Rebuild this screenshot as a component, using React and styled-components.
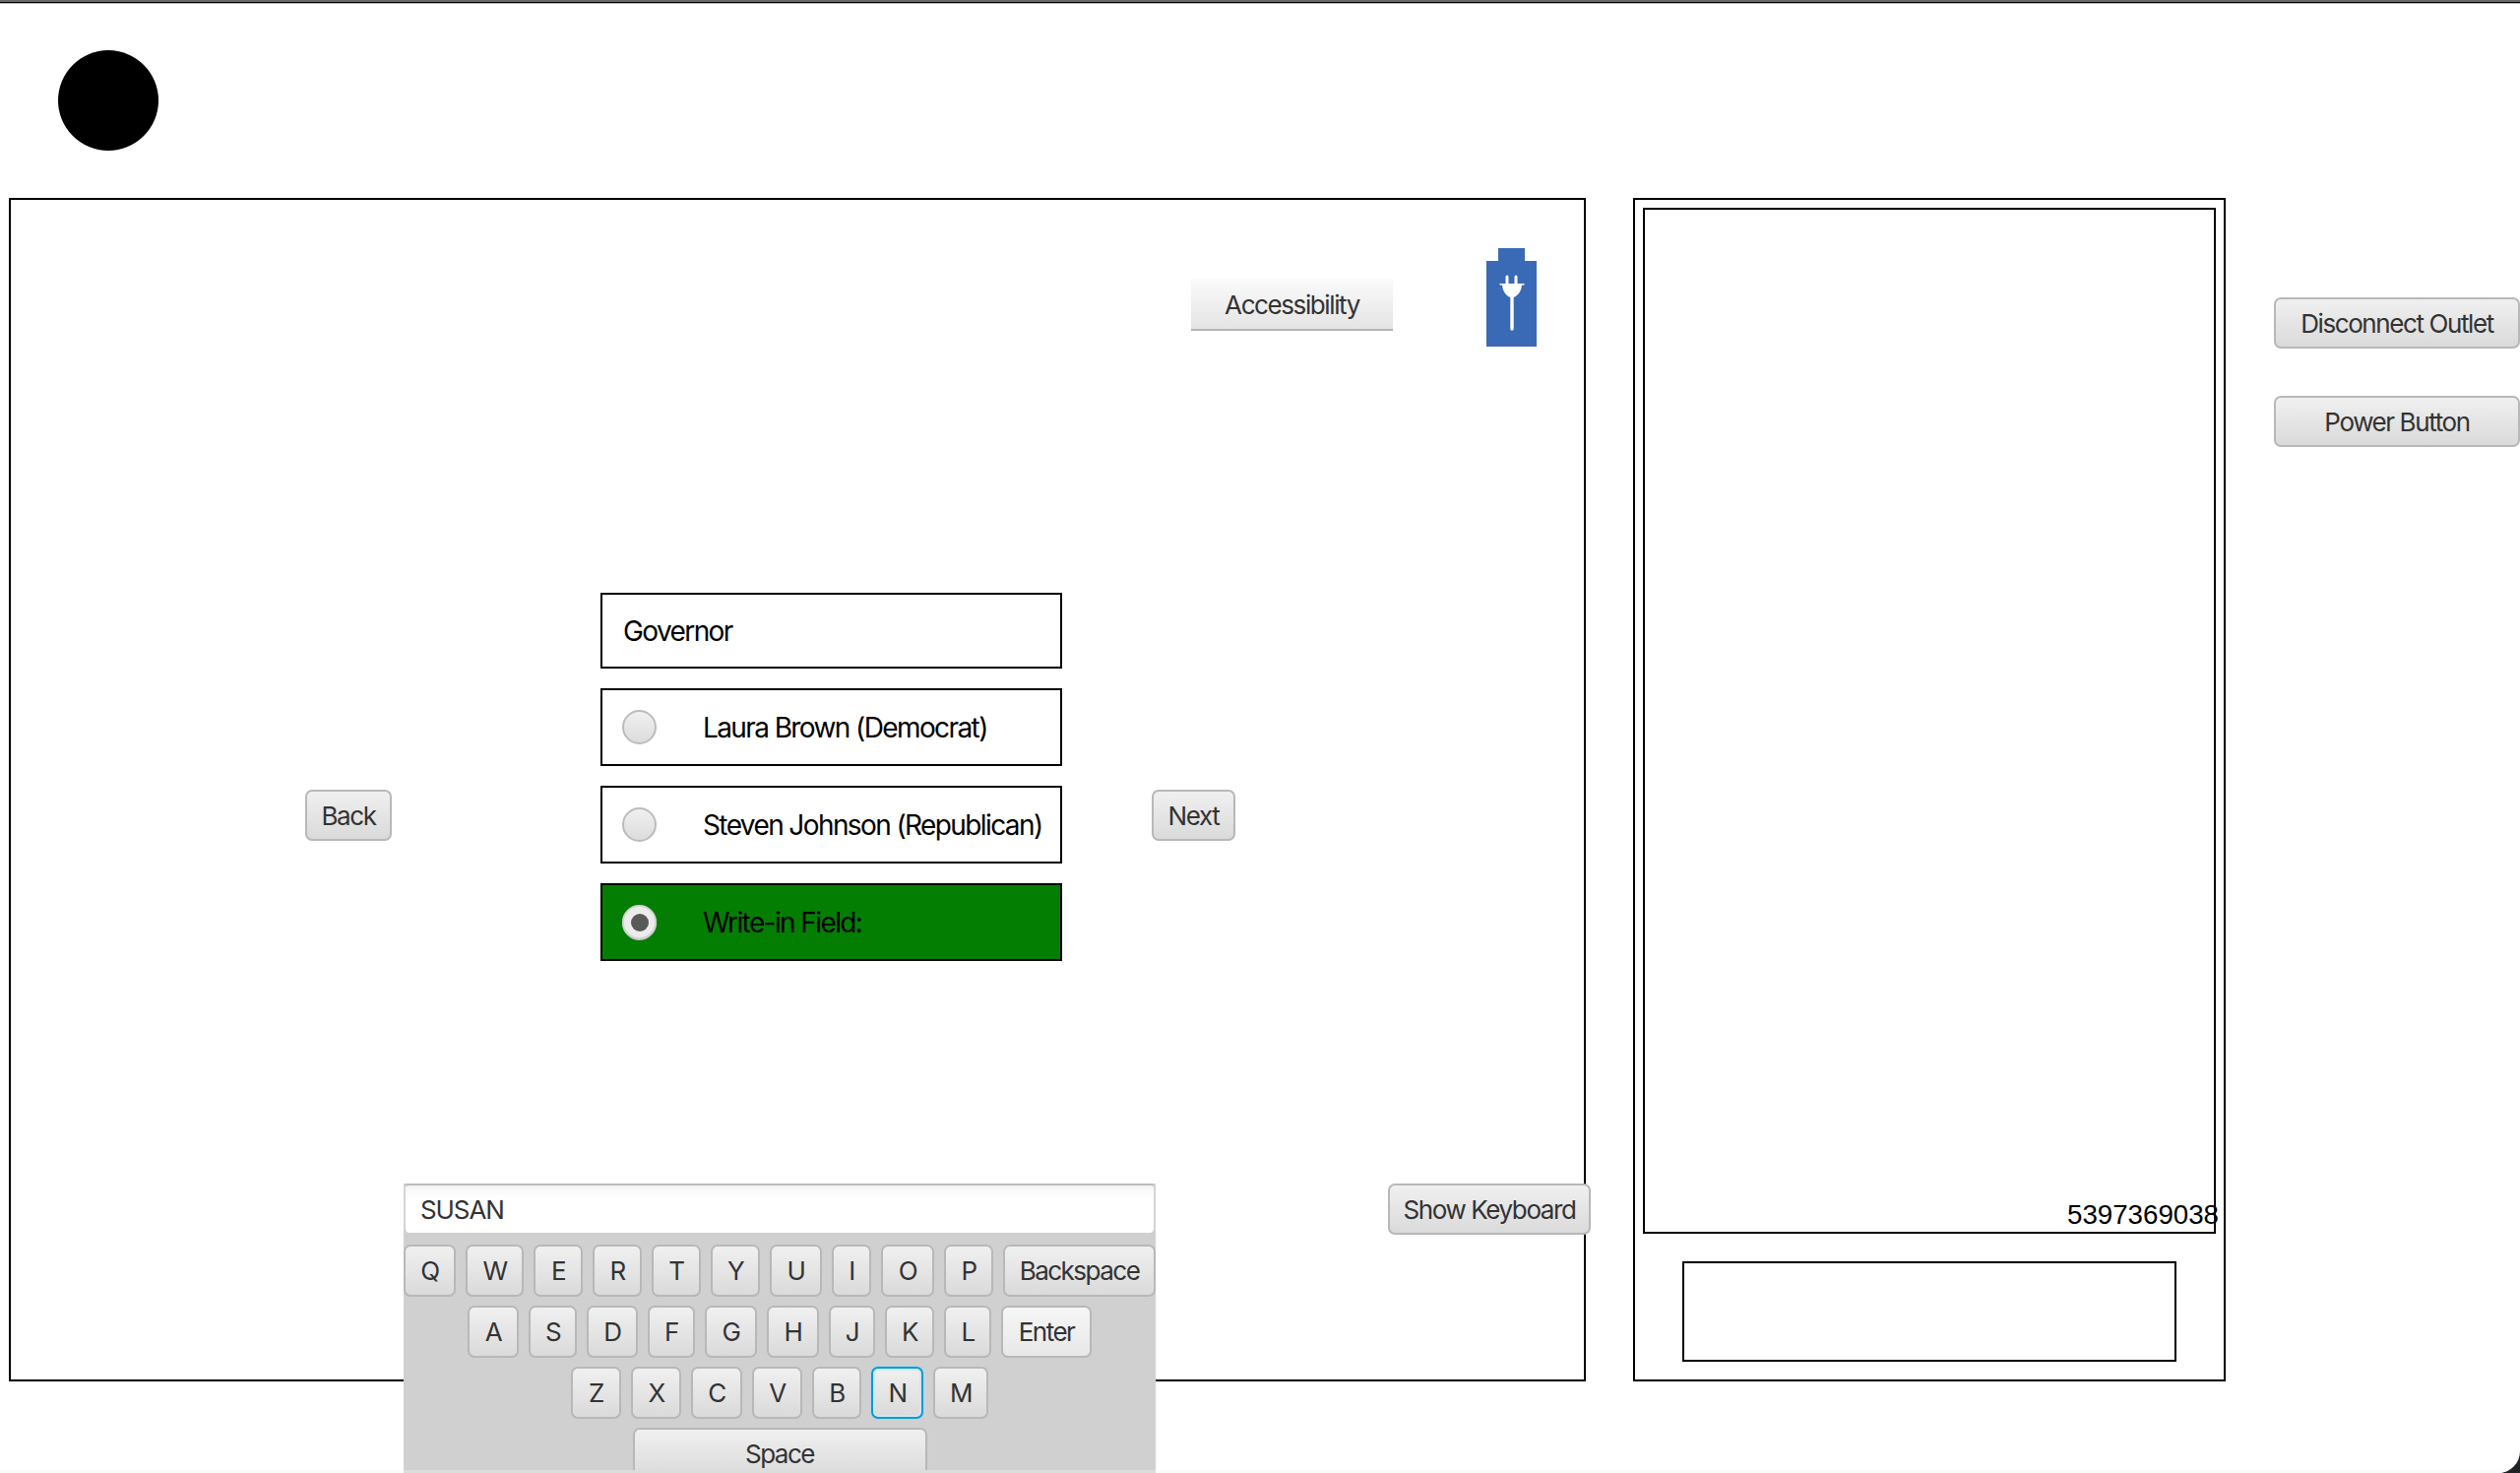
import React from "react";
import styled, { createGlobalStyle } from "styled-components";

const GlobalStyle = createGlobalStyle`
  html, body {
    margin: 0;
    padding: 0;
    background: #1e2326;
  }
`;

const Page = styled.div`
  position: relative;
  width: 2560px;
  height: 1496px;
  overflow: hidden;
  background: #fff;
  border-bottom-right-radius: 22px;
  font-family: Inter, "Liberation Sans", sans-serif;
  color: #000;
`;

const TitleEdge = styled.div`
  height: 3px;
  background: linear-gradient(#6a6a6a 66%, #000 66%);
  border-bottom: 1px solid #bbb;
`;

const BottomEdge = styled.div`
  position: absolute;
  left: 0;
  right: 0;
  bottom: 0;
  height: 3px;
  background: #fbfbfb;
`;

const Header = styled.div`
  height: 197px;
  padding: 47px 0 0 59px;
  box-sizing: border-box;
`;

const Circle = styled.div`
  width: 102px;
  height: 102px;
  border-radius: 50%;
  background: #000;
`;

const Content = styled.div`
  display: flex;
  align-items: flex-start;
  padding-left: 9px;
`;

const MainPanel = styled.div`
  box-sizing: border-box;
  width: 1602px;
  height: 1202px;
  border: 2px solid #000;
  display: flex;
  flex-direction: column;
`;

const TopRow = styled.div`
  display: flex;
  justify-content: flex-end;
  align-items: flex-start;
  gap: 95px;
  margin-top: 49px;
  padding-right: 48px;
`;

const FlatButton = styled.div`
  box-sizing: border-box;
  width: 205px;
  height: 53px;
  margin-top: 31px;
  padding-top: 2px;
  display: flex;
  align-items: center;
  justify-content: center;
  background: linear-gradient(#fbfbfb, #e4e4e4);
  border-bottom: 2px solid #b5b5b5;
  font-size: 26px;
  letter-spacing: -1.4px;
  color: #333;
`;

const MiddleRow = styled.div`
  display: flex;
  align-items: flex-start;
  margin-top: 250px;
  padding-left: 299px;
`;

const Button = styled.div`
  box-sizing: border-box;
  flex: none;
  width: ${(p) => p.$w}px;
  height: 52px;
  display: flex;
  align-items: center;
  justify-content: center;
  border: 2px solid #b8b8b8;
  border-radius: 7px;
  background: linear-gradient(#f0f0f0, #dadada);
  font-size: 26px;
  letter-spacing: -1.4px;
  color: #333;
`;

const BackButton = styled(Button)`
  margin-top: 200px;
`;

const NextButton = styled(Button)`
  margin: 200px 0 0 91px;
`;

const Ballot = styled.div`
  width: 469px;
  margin-left: 212px;
  display: flex;
  flex-direction: column;
  gap: 20px;
`;

const BallotTitle = styled.div`
  box-sizing: border-box;
  height: 77px;
  display: flex;
  align-items: center;
  padding-left: 21px;
  border: 2px solid #000;
  font-size: 28px;
  letter-spacing: -1.6px;
`;

const Choice = styled.div`
  box-sizing: border-box;
  height: 79px;
  display: flex;
  align-items: center;
  padding-left: 20px;
  gap: 47px;
  border: 2px solid #000;
  background: ${(p) => (p.$selected ? "#037e03" : "#fff")};
  font-size: 28px;
  letter-spacing: -1.6px;
  white-space: nowrap;
`;

const Radio = styled.span`
  box-sizing: border-box;
  flex: none;
  width: 35px;
  height: 35px;
  border-radius: 50%;
  border: 2px solid ${(p) => (p.$on ? "#d4d4d4" : "#bcbcbc")};
  background: ${(p) => (p.$on ? "#ececec" : "linear-gradient(#f0f0f0, #dcdcdc)")};
  box-shadow: ${(p) => (p.$on ? "0 1px 0 #bdbdbd" : "none")};
  display: flex;
  align-items: center;
  justify-content: center;
  &::after {
    content: "";
    display: ${(p) => (p.$on ? "block" : "none")};
    width: 18px;
    height: 18px;
    border-radius: 50%;
    background: #595959;
  }
`;

const KeyboardToggle = styled(Button)`
  align-self: flex-end;
  margin: 226px -7px 0 0;
  position: relative;
`;

const SidePanel = styled.div`
  box-sizing: border-box;
  width: 602px;
  height: 1202px;
  margin-left: 48px;
  padding: 8px;
  border: 2px solid #000;
  display: flex;
  flex-direction: column;
  align-items: center;
`;

const Screen = styled.div`
  box-sizing: border-box;
  width: 582px;
  height: 1042px;
  flex: none;
  border: 2px solid #000;
  display: flex;
  align-items: flex-end;
  justify-content: flex-end;
`;

const PhoneNumber = styled.span`
  margin-right: -5px;
  font-family: "Liberation Sans", Arial, sans-serif;
  font-size: 27.7px;
  line-height: 34px;
`;

const Receipt = styled.div`
  box-sizing: border-box;
  width: 502px;
  height: 102px;
  margin-top: 28px;
  border: 2px solid #000;
`;

const ActionColumn = styled.div`
  display: flex;
  flex-direction: column;
  gap: 48px;
  margin: 101px 0 0 49px;
`;

const Keyboard = styled.div`
  position: absolute;
  z-index: 1;
  left: 410px;
  top: 1202px;
  box-sizing: border-box;
  width: 764px;
  height: 294px;
  overflow: hidden;
  background: #d0d0d0;
  border-bottom: 3px solid #dcdcdc;
`;

const KeyboardField = styled.div`
  box-sizing: border-box;
  height: 50px;
  display: flex;
  align-items: center;
  padding-left: 15px;
  background: linear-gradient(#f4f4f4, #fff 12px);
  border: 2px solid #d4d4d4;
  border-top-color: #bcbcbc;
  border-bottom: 0;
  border-radius: 5px;
  font-size: 26px;
  letter-spacing: -1.1px;
  color: #333;
`;

const KeyRows = styled.div`
  display: flex;
  flex-direction: column;
  gap: 9px;
  margin-top: 12px;
`;

const KeyRow = styled.div`
  display: flex;
  justify-content: center;
  gap: 10px;
`;

const Key = styled.div`
  box-sizing: border-box;
  flex: none;
  width: ${(p) => p.$w}px;
  height: 53px;
  display: flex;
  align-items: center;
  justify-content: center;
  border: 2px solid ${(p) => (p.$focused ? "#039ed3" : "#b8b8b8")};
  border-radius: 7px;
  background: ${(p) =>
    p.$light
      ? "linear-gradient(#f6f6f6, #e8e8e8)"
      : "linear-gradient(#f0f0f0, #dadada)"};
  box-shadow: ${(p) =>
    p.$focused ? "0 0 0 1px #b4d4e2, inset 0 0 0 2px #d2e6ee" : "none"};
  font-size: 26px;
  letter-spacing: -1.5px;
  color: #333;
`;

const keyRows = [
  [
    ["Q", 53],
    ["W", 59],
    ["E", 50],
    ["R", 50],
    ["T", 50],
    ["Y", 50],
    ["U", 53],
    ["I", 40],
    ["O", 54],
    ["P", 50],
    ["Backspace", 155],
  ],
  [
    ["A", 52],
    ["S", 49],
    ["D", 52],
    ["F", 48],
    ["G", 53],
    ["H", 53],
    ["J", 47],
    ["K", 50],
    ["L", 48],
    ["Enter", 92, true],
  ],
  [
    ["Z", 51],
    ["X", 51],
    ["C", 52],
    ["V", 51],
    ["B", 50],
    ["N", 53, false, true],
    ["M", 56],
  ],
  [["Space", 299]],
];

function BatteryIcon() {
  return (
    <svg width="51" height="100" viewBox="0 0 51 100">
      <path d="M12 0h27v13h12v87H0V13h12z" fill="#3a6ab5" />
      <path
        d="M19.5 29a1.5 1.5 0 0 1 3 0v7h6v-7a1.5 1.5 0 0 1 3 0v7h7v1.5H36c-.5 6-3.5 10.5-8.3 12.5v32a1.7 1.7 0 0 1-3.4 0V50c-4.8-2-7.800-6.500-8.300-12.500h-2.500V36h6z"
        fill="#fff"
      />
    </svg>
  );
}

function App() {
  return (
    <Page>
      <GlobalStyle />
      <TitleEdge />
      <Header>
        <Circle />
      </Header>
      <Content>
        <MainPanel>
          <TopRow>
            <FlatButton>Accessibility</FlatButton>
            <BatteryIcon />
          </TopRow>
          <MiddleRow>
            <BackButton $w={88}>Back</BackButton>
            <Ballot>
              <BallotTitle>Governor</BallotTitle>
              <Choice>
                <Radio />
                Laura Brown (Democrat)
              </Choice>
              <Choice>
                <Radio />
                Steven Johnson (Republican)
              </Choice>
              <Choice $selected>
                <Radio $on />
                Write-in Field:
              </Choice>
            </Ballot>
            <NextButton $w={85}>Next</NextButton>
          </MiddleRow>
          <KeyboardToggle $w={206}>Show Keyboard</KeyboardToggle>
        </MainPanel>
        <SidePanel>
          <Screen>
            <PhoneNumber>5397369038</PhoneNumber>
          </Screen>
          <Receipt />
        </SidePanel>
        <ActionColumn>
          <Button $w={250}>Disconnect Outlet</Button>
          <Button $w={250}>Power Button</Button>
        </ActionColumn>
      </Content>
      <BottomEdge />
      <Keyboard>
        <KeyboardField>SUSAN</KeyboardField>
        <KeyRows>
          {keyRows.map((row, i) => (
            <KeyRow key={i}>
              {row.map(([label, w, light, focused]) => (
                <Key key={label} $w={w} $light={light} $focused={focused}>
                  {label}
                </Key>
              ))}
            </KeyRow>
          ))}
        </KeyRows>
      </Keyboard>
    </Page>
  );
}

export default App;
